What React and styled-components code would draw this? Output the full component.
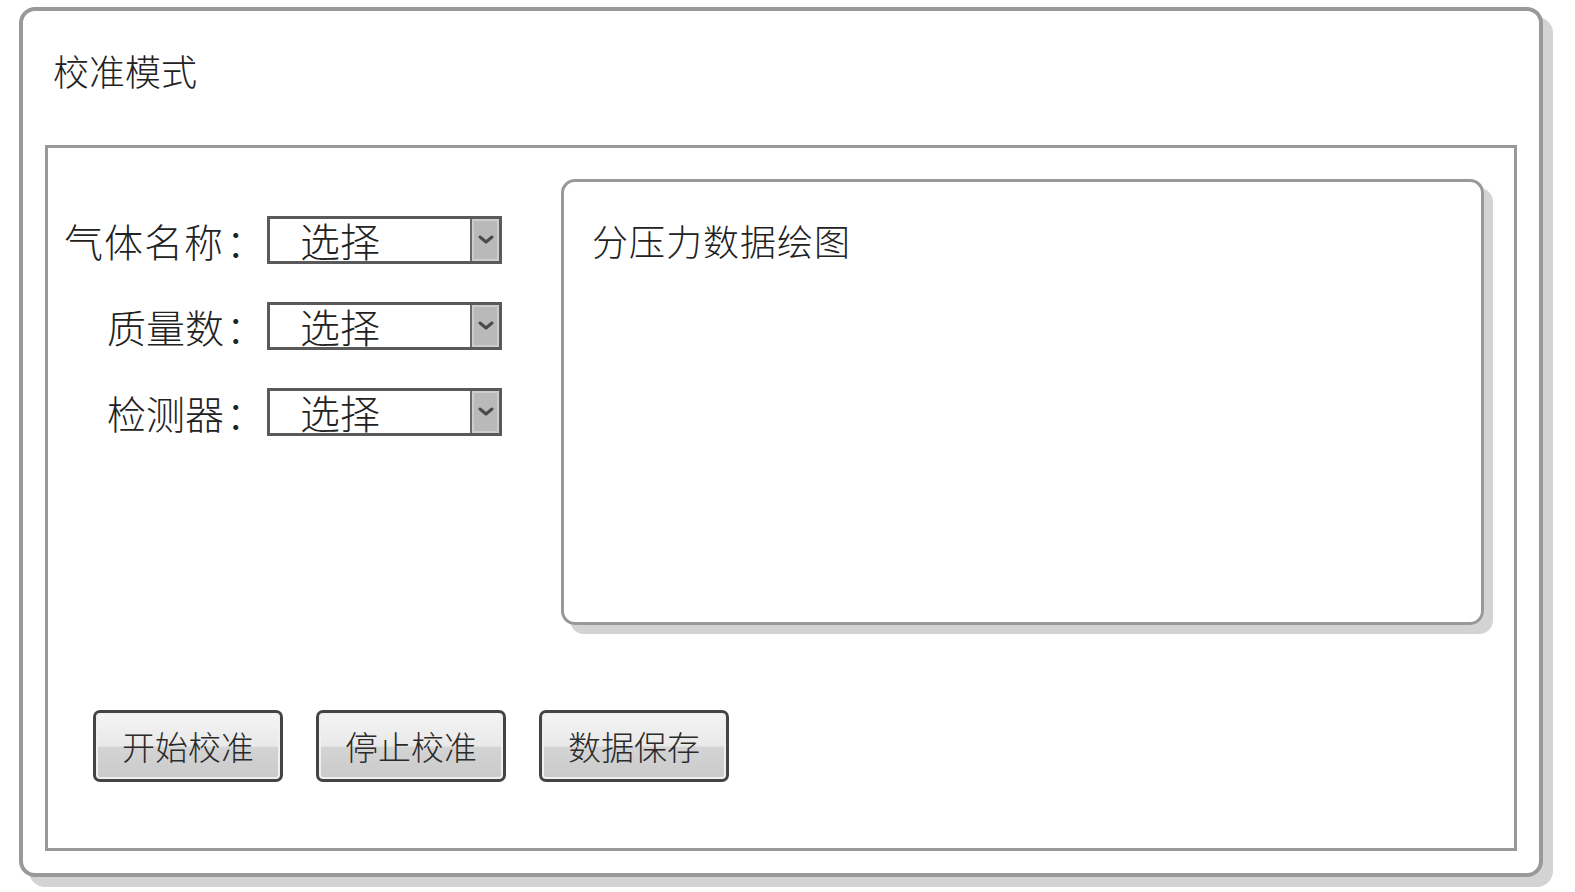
import React from "react";
import styled, { createGlobalStyle } from "styled-components";

const Global = createGlobalStyle`
  html, body { margin: 0; padding: 0; background: #fff; }
  body {
    font-family: "Noto Sans CJK SC", "Noto Sans", sans-serif;
    color: #222;
  }
`;

const Page = styled.div`
  padding: 7px 0 0 19px;
  width: 1575px;
  height: 892px;
  box-sizing: border-box;
  overflow: hidden;
`;

const Window = styled.div`
  box-sizing: border-box;
  width: 1524px;
  height: 870px;
  border: 4px solid #999;
  border-radius: 16px;
  box-shadow: 10px 10px 0 #d3d3d3;
  background: #fff;
  padding: 0 22px 22px 22px;
  display: flex;
  flex-direction: column;
`;

const Title = styled.div`
  margin: 41px 0 57px 8px;
  height: 36px;
  font-size: 36px;
  line-height: 36px;
  font-weight: 300;
`;

const Frame = styled.div`
  flex: 1;
  border: 3px solid #999;
  display: flex;
  flex-direction: column;
`;

const TopRow = styled.div`
  display: flex;
  padding: 31px 30px 0 0;
`;

const Form = styled.div`
  flex: 0 0 513px;
  display: grid;
  grid-template-columns: 217px 235px;
  grid-auto-rows: 48px;
  column-gap: 2px;
  row-gap: 38px;
  padding-top: 37px;
  align-content: start;
`;

const Label = styled.div`
  display: flex;
  justify-content: flex-end;
  font-size: 39px;
  line-height: 48px;
  font-weight: 300;
  white-space: nowrap;
`;

const LabelText = styled.span`
  letter-spacing: ${(p) => (p.$spaced ? "1px" : "0")};
`;

const Colon = styled.span`
  margin-left: 2px;
  width: 39px;
`;

const Select = styled.div`
  box-sizing: border-box;
  border: 3px solid #5a5a5a;
  display: flex;
  background: #fff;
`;

const SelectText = styled.div`
  flex: 1;
  padding-left: 30px;
  font-size: 40px;
  line-height: 42px;
  font-weight: 300;
`;

const Arrow = styled.div`
  width: 27px;
  border-left: 2px solid #6a6a6a;
  background: #b9b9b9;
  box-shadow: inset 0 0 0 2px #cdcdcd;
  display: flex;
  align-items: center;
  justify-content: center;
`;

const Panel = styled.div`
  flex: 1;
  height: 446px;
  box-sizing: border-box;
  border: 3px solid #999;
  border-radius: 14px;
  box-shadow: 9px 9px 0 #d3d3d3;
  padding: 40px 0 0 28px;
`;

const PanelTitle = styled.div`
  font-size: 36px;
  line-height: 36px;
  font-weight: 300;
  letter-spacing: 1px;
`;

const ButtonRow = styled.div`
  display: flex;
  gap: 33px;
  margin-top: 85px;
  padding-left: 45px;
`;

const Button = styled.button`
  box-sizing: border-box;
  width: 190px;
  height: 72px;
  border: 3px solid #444;
  border-radius: 7px;
  background: linear-gradient(
    to bottom,
    #f4f4f4 0%,
    #e9e9e9 50%,
    #d4d4d4 52%,
    #cacaca 100%
  );
  box-shadow: inset 0 0 0 2px #f0f0f0;
  font-family: "Noto Sans CJK SC", "Noto Sans", sans-serif;
  font-size: 33px;
  font-weight: 300;
  color: #2a2a2a;
  padding: 0;
  cursor: pointer;
`;

const Chevron = () => (
  <svg width="16" height="10" viewBox="0 0 16 10">
    <polyline points="2,2 8,7 14,2" fill="none" stroke="#4a4a4a" strokeWidth="3" strokeLinejoin="round" strokeLinecap="round" />
  </svg>
);

const fields = [
  { label: "气体名称", spaced: true },
  { label: "质量数" },
  { label: "检测器" },
];

export default function App() {
  return (
    <Page>
      <Global />
      <Window>
        <Title>校准模式</Title>
        <Frame>
          <TopRow>
            <Form>
              {fields.map((f) => (
                <React.Fragment key={f.label}>
                  <Label>
                    <LabelText $spaced={f.spaced}>{f.label}</LabelText>
                    <Colon>：</Colon>
                  </Label>
                  <Select>
                    <SelectText>选择</SelectText>
                    <Arrow>
                      <Chevron />
                    </Arrow>
                  </Select>
                </React.Fragment>
              ))}
            </Form>
            <Panel>
              <PanelTitle>分压力数据绘图</PanelTitle>
            </Panel>
          </TopRow>
          <ButtonRow>
            <Button>开始校准</Button>
            <Button>停止校准</Button>
            <Button>数据保存</Button>
          </ButtonRow>
        </Frame>
      </Window>
    </Page>
  );
}
